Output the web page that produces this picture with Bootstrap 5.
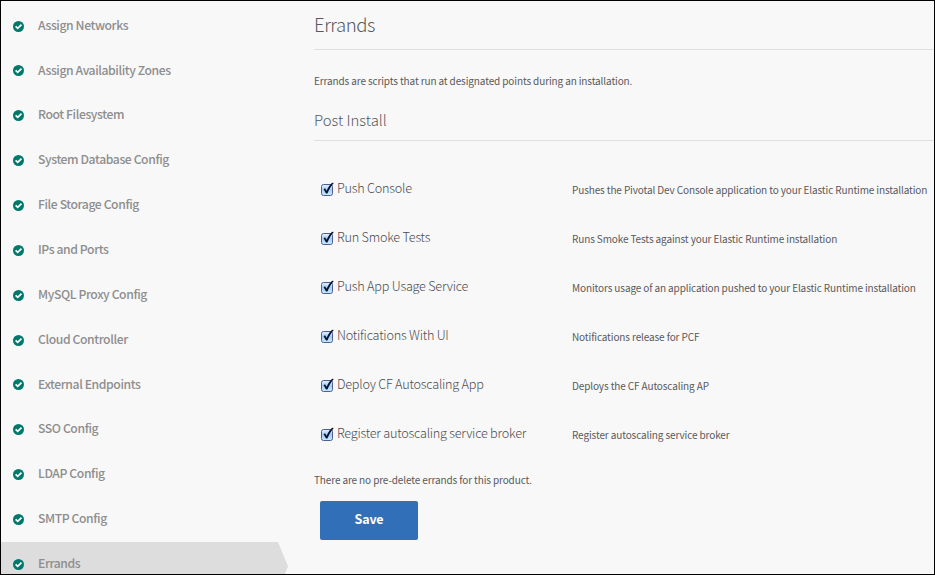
<!DOCTYPE html>
<html lang="en">
<head>
<meta charset="utf-8">
<meta name="viewport" content="width=device-width, initial-scale=1">
<title>Errands</title>
<link href="https://cdn.jsdelivr.net/npm/bootstrap@5.3.0/dist/css/bootstrap.min.css" rel="stylesheet">
<style>
body{font-family:"Noto Sans CJK SC","Open Sans",sans-serif;background:#f8f8f8;color:#58595b}
.frame{width:935px;height:575px;border:1px solid #000;background:#f8f8f8}
.steps{width:288px;padding-top:2.7px;flex:none}
.step{height:44.86px;flex:none;padding:0 0 2px 12px;font-size:12.2px;font-weight:500;letter-spacing:-.41px;color:#8e8e8e;line-height:20px;gap:14px}
.step span{padding-bottom:.9px}
.step svg{width:11px;height:11px;position:relative;top:1px;flex:none}
.step.current{background:#ddd;clip-path:polygon(0 0,277px 0,287px 54%,279px 100%,0 100%)}
.pane{padding-left:25px}
.title{font-size:18.6px;font-weight:300;letter-spacing:-.48px;line-height:28px;margin:0;padding:9px 0 11px;border-bottom:1px solid #e0e0e0}
.note{font-size:10px;letter-spacing:-.122px;line-height:16px;margin:0}
.intro{margin-top:23px}
.subtitle{font-size:14.9px;font-weight:300;line-height:24px;margin:19px 0 24px;padding-bottom:8px;border-bottom:1px solid #e0e0e0}
.errand{height:49px}
.errand-name{width:258px;padding-left:6px;font-size:12.7px;font-weight:300;letter-spacing:-.24px;line-height:20px;gap:2px;color:#4c4d50}
.errand-name span{padding-bottom:3px}
.errand-name svg{width:15px;height:15px;flex:none}
.errand .note{white-space:nowrap}
.closing{margin-top:13px}
.save{width:98px;height:39px;margin:13px 0 0 6px;background:#3170b8;border-radius:2px;color:#fff;font-size:12.5px;font-weight:700;letter-spacing:-.2px;line-height:20px;padding:0 0 4px}
</style>
<script src="https://cdn.jsdelivr.net/npm/bootstrap@5.3.0/dist/js/bootstrap.bundle.min.js"></script>
</head>
<body>
<svg width="0" height="0" class="position-absolute">
<defs>
<linearGradient id="glass" x1="0" y1="0" x2="0" y2="1"><stop offset="0" stop-color="#eaf3fc"/><stop offset=".45" stop-color="#a5cdf4"/><stop offset="1" stop-color="#c9ecff"/></linearGradient>
<symbol id="done" viewBox="0 0 11 11"><circle cx="5.5" cy="5.5" r="5.5" fill="#00796b"/><path d="M2.6 5.4 4.7 7.4 8.5 3.7" fill="none" stroke="#fff" stroke-width="1.7"/></symbol>
<symbol id="ticked" viewBox="0 0 15 15"><rect x="1.5" y="2.5" width="11" height="11" rx="2" fill="url(#glass)" stroke="#4c5d97"/><path d="M3.6 7.2 5 6.3 6.6 8.7C8.2 5.2 10 2.6 12.2.8L13.8.9C11 4.2 9 7.6 7.4 11.5L6 11.6Z" fill="#06122f"/></symbol>
</defs>
</svg>
<div class="frame d-flex overflow-hidden">
<nav class="steps d-flex flex-column">
<div class="step d-flex align-items-center"><svg><use href="#done"/></svg><span>Assign Networks</span></div>
<div class="step d-flex align-items-center"><svg><use href="#done"/></svg><span>Assign Availability Zones</span></div>
<div class="step d-flex align-items-center"><svg><use href="#done"/></svg><span>Root Filesystem</span></div>
<div class="step d-flex align-items-center"><svg><use href="#done"/></svg><span>System Database Config</span></div>
<div class="step d-flex align-items-center"><svg><use href="#done"/></svg><span>File Storage Config</span></div>
<div class="step d-flex align-items-center"><svg><use href="#done"/></svg><span>IPs and Ports</span></div>
<div class="step d-flex align-items-center"><svg><use href="#done"/></svg><span>MySQL Proxy Config</span></div>
<div class="step d-flex align-items-center"><svg><use href="#done"/></svg><span>Cloud Controller</span></div>
<div class="step d-flex align-items-center"><svg><use href="#done"/></svg><span>External Endpoints</span></div>
<div class="step d-flex align-items-center"><svg><use href="#done"/></svg><span>SSO Config</span></div>
<div class="step d-flex align-items-center"><svg><use href="#done"/></svg><span>LDAP Config</span></div>
<div class="step d-flex align-items-center"><svg><use href="#done"/></svg><span>SMTP Config</span></div>
<div class="step current d-flex align-items-center"><svg><use href="#done"/></svg><span>Errands</span></div>
</nav>
<main class="pane flex-grow-1">
<h1 class="title">Errands</h1>
<p class="note intro">Errands are scripts that run at designated points during an installation.</p>
<h2 class="subtitle">Post Install</h2>
<div class="errand d-flex align-items-center"><div class="errand-name d-flex align-items-center"><svg><use href="#ticked"/></svg><span>Push Console</span></div><p class="note">Pushes the Pivotal Dev Console application to your Elastic Runtime installation</p></div>
<div class="errand d-flex align-items-center"><div class="errand-name d-flex align-items-center"><svg><use href="#ticked"/></svg><span>Run Smoke Tests</span></div><p class="note">Runs Smoke Tests against your Elastic Runtime installation</p></div>
<div class="errand d-flex align-items-center"><div class="errand-name d-flex align-items-center"><svg><use href="#ticked"/></svg><span>Push App Usage Service</span></div><p class="note">Monitors usage of an application pushed to your Elastic Runtime installation</p></div>
<div class="errand d-flex align-items-center"><div class="errand-name d-flex align-items-center"><svg><use href="#ticked"/></svg><span>Notifications With UI</span></div><p class="note">Notifications release for PCF</p></div>
<div class="errand d-flex align-items-center"><div class="errand-name d-flex align-items-center"><svg><use href="#ticked"/></svg><span>Deploy CF Autoscaling App</span></div><p class="note">Deploys the CF Autoscaling AP</p></div>
<div class="errand d-flex align-items-center"><div class="errand-name d-flex align-items-center"><svg><use href="#ticked"/></svg><span>Register autoscaling service broker</span></div><p class="note">Register autoscaling service broker</p></div>
<p class="note closing">There are no pre-delete errands for this product.</p>
<button class="btn save" type="button">Save</button>
</main>
</div>
</body>
</html>
